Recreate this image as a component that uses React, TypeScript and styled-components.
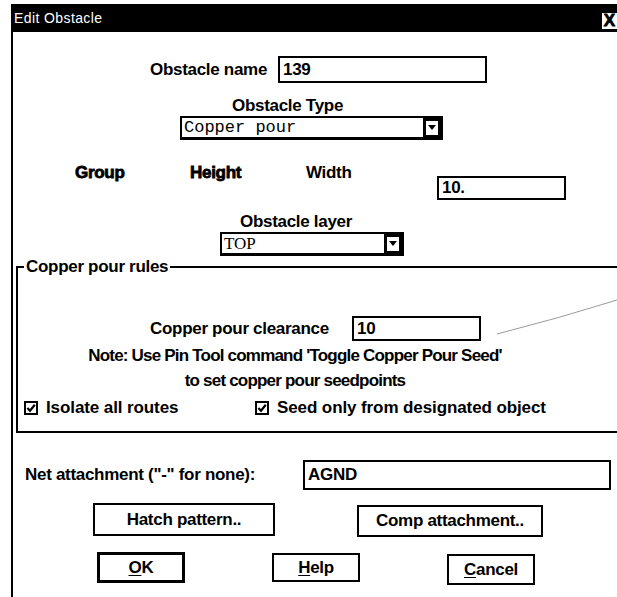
import React from 'react';
import styled, { createGlobalStyle } from 'styled-components';

const GlobalStyle = createGlobalStyle`
  html, body { margin:0; padding:0; background:#fff; overflow:hidden; }
  body { font-family: "Liberation Sans", Arial, sans-serif; color:#000; }
  * { box-sizing:border-box; }
`;

const Screen = styled.div`
  position:relative;
  width:617px;
  height:597px;
  overflow:hidden;
  background:#fff;
  padding:4px 0 0 11px;
`;

const Window = styled.div`
  width:606px;
  height:100%;
  display:flex;
  flex-direction:column;
`;

const TitleBar = styled.div`
  height:28px;
  flex:none;
  background:#000;
  color:#fff;
  display:flex;
  align-items:center;
  justify-content:space-between;
  padding-left:3px;
  font-size:14px;
  letter-spacing:0.4px;
`;

const CloseBox = styled.div`
  width:15px;
  height:16px;
  margin-top:6px;
  background:#fff;
  color:#000;
  font-weight:700;
  font-size:17px;
  line-height:16px;
  text-align:center;
  -webkit-text-stroke:0.8px #000;
`;

const Body = styled.div`
  flex:1;
  border-left:2px solid #000;
  display:flex;
  flex-direction:column;
  align-items:flex-start;
`;

const Label = styled.span<{ $heavy?: boolean }>`
  font-weight:700;
  font-size:17px;
  letter-spacing:-0.3px;
  line-height:18px;
  white-space:nowrap;
  ${p => p.$heavy && `-webkit-text-stroke:0.8px #000;`}
`;

// label column has a fixed width so the box lands where the dialog puts it
const Row = styled.div<{ $top: number; $left: number; $labelW: number }>`
  display:grid;
  grid-template-columns:${p => p.$labelW}px auto;
  align-items:center;
  margin-top:${p => p.$top}px;
  padding-left:${p => p.$left}px;
`;

const TextBox = styled.div<{ $w: number; $h: number }>`
  width:${p => p.$w}px;
  height:${p => p.$h}px;
  border:2px solid #000;
  background:#fff;
  padding-left:3px;
  display:flex;
  align-items:center;
  font-weight:700;
  font-size:17px;
  letter-spacing:-0.3px;
`;

const Field = styled.div<{ $top: number; $left: number }>`
  display:flex;
  flex-direction:column;
  align-items:flex-start;
  margin-top:${p => p.$top}px;
  margin-left:${p => p.$left}px;
  gap:1px;
`;

const FieldLabel = styled(Label)<{ $indent: number }>`
  margin-left:${p => p.$indent}px;
`;

const Select = styled.div<{ $w: number; $mono?: boolean }>`
  width:${p => p.$w}px;
  height:24px;
  border:2px solid #000;
  border-bottom-width:3px;
  display:flex;
  align-items:stretch;
  font-size:17px;
  font-family:${p => (p.$mono ? `"Liberation Mono", "Courier New", monospace` : `"Liberation Serif", "Times New Roman", serif`)};
`;

const SelectText = styled.div`
  flex:1;
  padding-left:2px;
  display:flex;
  align-items:center;
`;

const DropButton = styled.div`
  width:18px;
  background:#000;
  display:flex;
  align-items:center;
  justify-content:center;
  span{
    width:12px;
    height:14px;
    background:#fff;
    display:flex;
    align-items:center;
    justify-content:center;
  }
`;

const DimsRow = styled.div`
  display:grid;
  grid-template-columns:115px 116px 131px auto;
  align-items:start;
  margin-top:24px;
  margin-left:62px;
`;

const DimInput = styled(TextBox)`
  margin-top:12px;
`;

const GroupBox = styled.fieldset`
  margin:2px 0 0 3px;
  width:640px;
  padding:0 0 14px 0;
  border:2px solid #000;
  border-right:none;
  min-width:0;
  legend{
    margin-left:6px;
    padding:0 2px;
    font-weight:700;
    font-size:17px;
    letter-spacing:-0.3px;
    line-height:18px;
  }
`;

const Note = styled.div`
  width:554px;
  margin-top:2px;
  text-align:center;
  font-weight:700;
  font-size:17px;
  letter-spacing:-0.8px;
  line-height:25px;
`;

const CheckRow = styled.div`
  display:flex;
  align-items:center;
  margin-top:6px;
  padding-left:6px;
`;

const Check = styled.label<{ $w?: number }>`
  display:flex;
  align-items:center;
  gap:8px;
  width:${p => (p.$w ? `${p.$w}px` : 'auto')};
  font-weight:700;
  font-size:17px;
  letter-spacing:-0.1px;
  line-height:18px;
`;

const ButtonRow = styled.div<{ $top: number; $left: number; $gap: number }>`
  display:flex;
  align-items:flex-start;
  margin-top:${p => p.$top}px;
  padding-left:${p => p.$left}px;
  gap:${p => p.$gap}px;
`;

const Button = styled.button<{ $w: number; $h: number; $dy?: number; $default?: boolean }>`
  width:${p => p.$w}px;
  height:${p => p.$h}px;
  margin-top:${p => p.$dy ?? 0}px;
  background:#fff;
  border:${p => (p.$default ? 3 : 2)}px solid #000;
  border-radius:0;
  padding:0;
  font-family:"Liberation Sans", Arial, sans-serif;
  font-weight:700;
  font-size:17px;
  letter-spacing:-0.3px;
  color:#000;
  u{ text-decoration-thickness:1px; text-underline-offset:2px; }
`;

const Scribble = styled.svg`
  position:absolute;
  left:0;
  top:0;
  pointer-events:none;
`;

const CheckIcon = () => (
  <svg width="14" height="14" viewBox="0 0 14 14">
    <rect x="1" y="1" width="12" height="12" fill="#fff" stroke="#000" strokeWidth="2" />
    <path d="M3.4 7 L6 9.8 L10.8 3.8" fill="none" stroke="#000" strokeWidth="2.2" />
  </svg>
);

const Arrow = () => (
  <span>
    <svg width="8" height="5" viewBox="0 0 8 5">
      <path d="M0 0 H8 L4 5 Z" fill="#000" />
    </svg>
  </span>
);

export default function App() {
  return (
    <Screen>
      <GlobalStyle />
      <Window>
        <TitleBar>
          <span>Edit Obstacle</span>
          <CloseBox>X</CloseBox>
        </TitleBar>
        <Body>
          <Row $top={24} $left={137} $labelW={128}>
            <Label>Obstacle name</Label>
            <TextBox $w={209} $h={27}>139</TextBox>
          </Row>

          <Field $top={14} $left={167}>
            <FieldLabel $indent={52}>Obstacle Type</FieldLabel>
            <Select $w={263} $mono>
              <SelectText>Copper pour</SelectText>
              <DropButton><Arrow /></DropButton>
            </Select>
          </Field>

          <DimsRow>
            <Label $heavy>Group</Label>
            <Label $heavy>Height</Label>
            <Label>Width</Label>
            <DimInput $w={129} $h={24}>10.</DimInput>
          </DimsRow>

          <Field $top={13} $left={207}>
            <FieldLabel $indent={20}>Obstacle layer</FieldLabel>
            <Select $w={184}>
              <SelectText>TOP</SelectText>
              <DropButton><Arrow /></DropButton>
            </Select>
          </Field>

          <GroupBox>
            <legend>Copper pour rules</legend>
            <Row $top={40} $left={132} $labelW={202}>
              <Label>Copper pour clearance</Label>
              <TextBox $w={129} $h={25}>10</TextBox>
            </Row>
            <Note>
              Note: Use Pin Tool command 'Toggle Copper Pour Seed'
              <br />
              to set copper pour seedpoints
            </Note>
            <CheckRow>
              <Check $w={231}><CheckIcon />Isolate all routes</Check>
              <Check><CheckIcon />Seed only from designated object</Check>
            </CheckRow>
          </GroupBox>

          <Row $top={27} $left={12} $labelW={278}>
            <Label>Net attachment ("-" for none):</Label>
            <TextBox $w={308} $h={30}>AGND</TextBox>
          </Row>

          <ButtonRow $top={13} $left={80} $gap={82}>
            <Button $w={182} $h={33}>Hatch pattern..</Button>
            <Button $w={186} $h={32} $dy={2}>Comp attachment..</Button>
          </ButtonRow>
          <ButtonRow $top={15} $left={84} $gap={87}>
            <Button $w={88} $h={31} $default><u>O</u>K</Button>
            <Button $w={88} $h={29} $dy={1}><u>H</u>elp</Button>
            <Button $w={88} $h={31} $dy={2}><u>C</u>ancel</Button>
          </ButtonRow>
        </Body>
      </Window>
      <Scribble width="617" height="597">
        <path d="M497 334 Q560 318 617 300" fill="none" stroke="#9a9a9a" strokeWidth="1" />
      </Scribble>
    </Screen>
  );
}
